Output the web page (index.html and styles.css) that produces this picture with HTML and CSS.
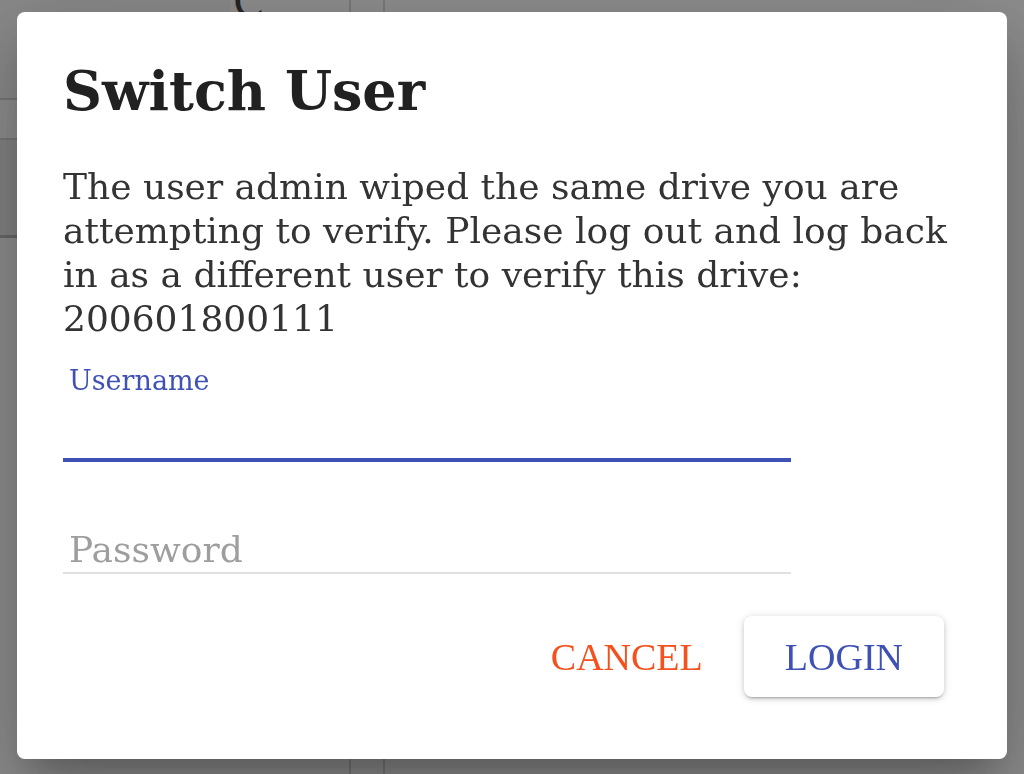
FILE: index.html
```html
<!DOCTYPE html>
<html lang="en">
<head>
<meta charset="utf-8">
<title>Switch User</title>
<link rel="stylesheet" href="styles.css">
</head>
<body>
<div class="page">
  <div class="page-top">
    <div class="page-left">
      <div class="page-left-title">Rec</div>
      <div class="page-left-row"></div>
      <div class="page-left-row tall"></div>
    </div>
    <div class="page-c">C</div>
    <div class="page-col"></div>
  </div>
</div>
<div class="overlay">
  <div class="dialog" role="dialog" aria-labelledby="dlg-title">
    <h2 class="dialog-title" id="dlg-title">Switch User</h2>
    <div class="dialog-content">
      <p class="message">The user admin wiped the same drive you are attempting to verify. Please log out and log back in as a different user to verify this drive: 200601800111</p>
      <div class="field field-focused">
        <div class="field-label">Username</div>
        <div class="field-input"></div>
      </div>
      <div class="field">
        <div class="field-input placeholder">Password</div>
      </div>
    </div>
    <div class="dialog-actions">
      <button class="btn btn-cancel" type="button">CANCEL</button>
      <button class="btn btn-login" type="button">LOGIN</button>
    </div>
  </div>
</div>
</body>
</html>
```

FILE: styles.css
```css
html, body {
  margin: 0;
  padding: 0;
  height: 100%;
}

body {
  background: #ffffff;
  font-family: "DejaVu Serif", serif;
  overflow: hidden;
}

/* underlying page (dimmed by overlay) */
.page {
  height: 100%;
}

.page-top {
  display: flex;
  height: 100%;
}

.page-left {
  width: 230px;
  display: flex;
  flex-direction: column;
}

.page-left-title {
  font-family: "DejaVu Sans", sans-serif;
  font-size: 34px;
  color: #555;
  margin-left: -62px;
  height: 100px;
  padding-top: 30px;
  box-sizing: border-box;
  border-bottom: 2px solid #d6d6d6;
  background: #f7f7f7;
}

.page-left-row {
  height: 38px;
  border-bottom: 2px solid #d6d6d6;
}

.page-left-row.tall {
  height: 95px;
  border-bottom: 3px solid #bdbdbd;
  background: #ededed;
}

.page-c {
  font-family: "DejaVu Sans", sans-serif;
  font-size: 44px;
  color: #444;
  margin-top: -24px;
  margin-left: 3px;
  width: 116px;
}

.page-col {
  width: 32px;
  border-left: 2px solid #dadada;
  border-right: 2px solid #dadada;
}

/* overlay + dialog */
.overlay {
  position: fixed;
  inset: 0;
  background: rgba(0, 0, 0, 0.45);
  display: flex;
  justify-content: center;
  align-items: flex-start;
  padding-top: 12px;
}

.dialog {
  width: 990px;
  height: 747px;
  box-sizing: border-box;
  background: #ffffff;
  border-radius: 8px;
  box-shadow:
    0 22px 30px -14px rgba(0, 0, 0, 0.2),
    0 48px 76px 6px rgba(0, 0, 0, 0.14),
    0 18px 92px 16px rgba(0, 0, 0, 0.12);
  display: flex;
  flex-direction: column;
}

.dialog-title {
  margin: 0;
  padding: 48px 46px 0;
  font-family: "DejaVu Serif", serif;
  font-weight: bold;
  font-size: 54px;
  line-height: 62px;
  color: #212121;
}

.dialog-content {
  padding: 43px 46px 0;
}

.message {
  margin: 0;
  font-size: 36px;
  line-height: 44px;
  color: #333333;
}

.field {
  width: 728px;
  display: flex;
  flex-direction: column;
}

.field-focused {
  margin-top: 25px;
}

.field-label {
  font-size: 27px;
  line-height: 30px;
  color: #3f51b5;
  padding-left: 6px;
}

.field-input {
  height: 62px;
  border-bottom: 4px solid #3f51b5;
}

.field-input.placeholder {
  margin-top: 66px;
  height: 44px;
  font-size: 36px;
  line-height: 44px;
  color: #9e9e9e;
  padding-left: 6px;
  border-bottom: 2px solid #e0e0e0;
}

.dialog-actions {
  display: flex;
  justify-content: flex-end;
  padding: 42px 63px 0 0;
}

.btn {
  font-family: "Liberation Serif", serif;
  font-size: 38px;
  height: 81px;
  padding: 0 41px;
  border: none;
  background: transparent;
  border-radius: 8px;
  cursor: pointer;
}

.btn-cancel {
  color: #f4511e;
}

.btn-login {
  color: #3f51b5;
  background: #ffffff;
  box-shadow:
    0 3px 2px -2px rgba(0, 0, 0, 0.2),
    0 2px 4px 0 rgba(0, 0, 0, 0.14),
    0 1px 10px 0 rgba(0, 0, 0, 0.12);
}
```
